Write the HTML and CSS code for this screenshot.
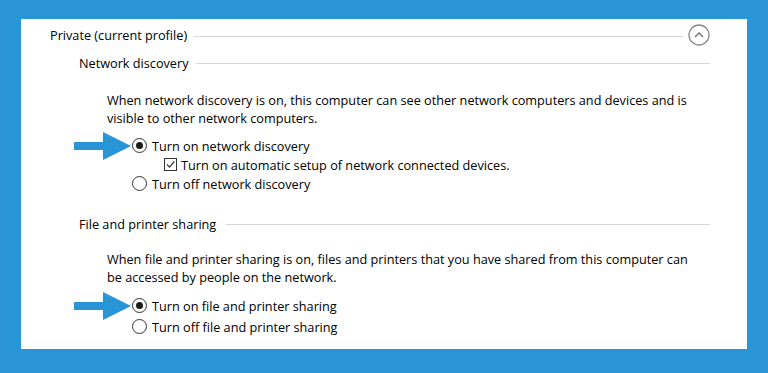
FILE: index.html
```html
<!DOCTYPE html>
<html lang="en">
<head>
    <meta charset="UTF-8">
    <meta name="viewport" content="width=device-width, initial-scale=1.0">
    <title>Network and sharing settings</title>
    <link rel="stylesheet" href="styles.css">
</head>
<body>

<div class="panel">
    <div class="profile-head">
        <span class="profile-title">Private (current profile)</span>
        <span class="rule"></span>
        <span class="collapse">
            <svg width="22" height="22" viewBox="0 0 22 22">
                <circle cx="11" cy="11" r="10" fill="none" stroke="#8a8a8a" stroke-width="1.3"/>
                <path d="M7 13 L11 9 L15 13" fill="none" stroke="#707070" stroke-width="1.3"/>
            </svg>
        </span>
    </div>

    <div class="section">
        <div class="section-head">
            <span>Network discovery</span>
            <span class="rule"></span>
        </div>
        <p class="desc">When network discovery is on, this computer can see other network computers and devices and is visible to other network computers.</p>
        <div class="options">
            <div class="option">
                <svg class="arrow" width="58" height="28" viewBox="0 0 58 28">
                    <path d="M0 10 H29 V0 L57 14 L29 28 V18 H0 Z" fill="#2a95d6"/>
                </svg>
                <span class="radio checked"></span>
                <span>Turn on network discovery</span>
            </div>
            <div class="option sub">
                <span class="checkbox">
                    <svg width="9" height="9" viewBox="0 0 9 9">
                        <path d="M1 4.5 L3.6 7.2 L8.2 1.5" fill="none" stroke="#333" stroke-width="1.2"/>
                    </svg>
                </span>
                <span>Turn on automatic setup of network connected devices.</span>
            </div>
            <div class="option">
                <span class="radio"></span>
                <span>Turn off network discovery</span>
            </div>
        </div>
    </div>

    <div class="section second">
        <div class="section-head">
            <span>File and printer sharing</span>
            <span class="rule"></span>
        </div>
        <p class="desc">When file and printer sharing is on, files and printers that you have shared from this computer can be accessed by people on the network.</p>
        <div class="options wide">
            <div class="option">
                <svg class="arrow" width="58" height="28" viewBox="0 0 58 28">
                    <path d="M0 10 H29 V0 L57 14 L29 28 V18 H0 Z" fill="#2a95d6"/>
                </svg>
                <span class="radio checked"></span>
                <span>Turn on file and printer sharing</span>
            </div>
            <div class="option">
                <span class="radio"></span>
                <span>Turn off file and printer sharing</span>
            </div>
        </div>
    </div>
</div>

</body>
</html>
```

FILE: styles.css
```css
body {
    margin: 0;
    background-color: #2a95d6;
    font-family: "Open Sans", "Noto Sans", sans-serif;
    font-size: 12.7px;
    color: #000;
    height: 373px;
    overflow: hidden;
}
.panel {
    background-color: #fff;
    margin: 19px 0 0 21px;
    width: 726px;
    height: 330px;
    box-sizing: border-box;
    padding: 5px 37px 0 29px;
}
.profile-head {
    display: flex;
    align-items: center;
    height: 22px;
}
.rule {
    flex: 1;
    height: 1px;
    background-color: #d6d6d6;
    margin-left: 7px;
}
.profile-head .rule {
    margin-right: 5px;
    margin-top: 3px;
}
.collapse {
    display: flex;
    width: 22px;
    height: 22px;
}
.section {
    padding-left: 29px;
    margin-top: 8px;
}
.section.second {
    margin-top: 22px;
}
.section-head {
    display: flex;
    align-items: center;
    height: 18px;
}
.second .section-head .rule {
    margin-left: 10px;
}
.desc {
    margin: 19px 0 0 28px;
    line-height: 18px;
    padding-right: 10px;
}
.second .desc {
    margin-top: 17px;
}
.options {
    margin: 9px 0 0 54px;
}
.options.wide {
    margin-top: 9px;
}
.option {
    position: relative;
    display: flex;
    align-items: center;
    height: 19px;
}
.options.wide .option {
    height: 21px;
}
.option.sub {
    padding-left: 31px;
}
.arrow {
    position: absolute;
    left: -59px;
    top: 50%;
    margin-top: -14px;
}
.radio {
    width: 13px;
    height: 13px;
    border: 1px solid #333;
    border-radius: 50%;
    margin-right: 5px;
    margin-left: -1px;
    display: flex;
    align-items: center;
    justify-content: center;
    flex-shrink: 0;
}
.radio.checked::after {
    content: "";
    width: 7px;
    height: 7px;
    border-radius: 50%;
    background-color: #1a1a1a;
}
.checkbox {
    width: 11px;
    height: 11px;
    border: 1px solid #333;
    margin-right: 4px;
    display: flex;
    align-items: center;
    justify-content: center;
}
```
